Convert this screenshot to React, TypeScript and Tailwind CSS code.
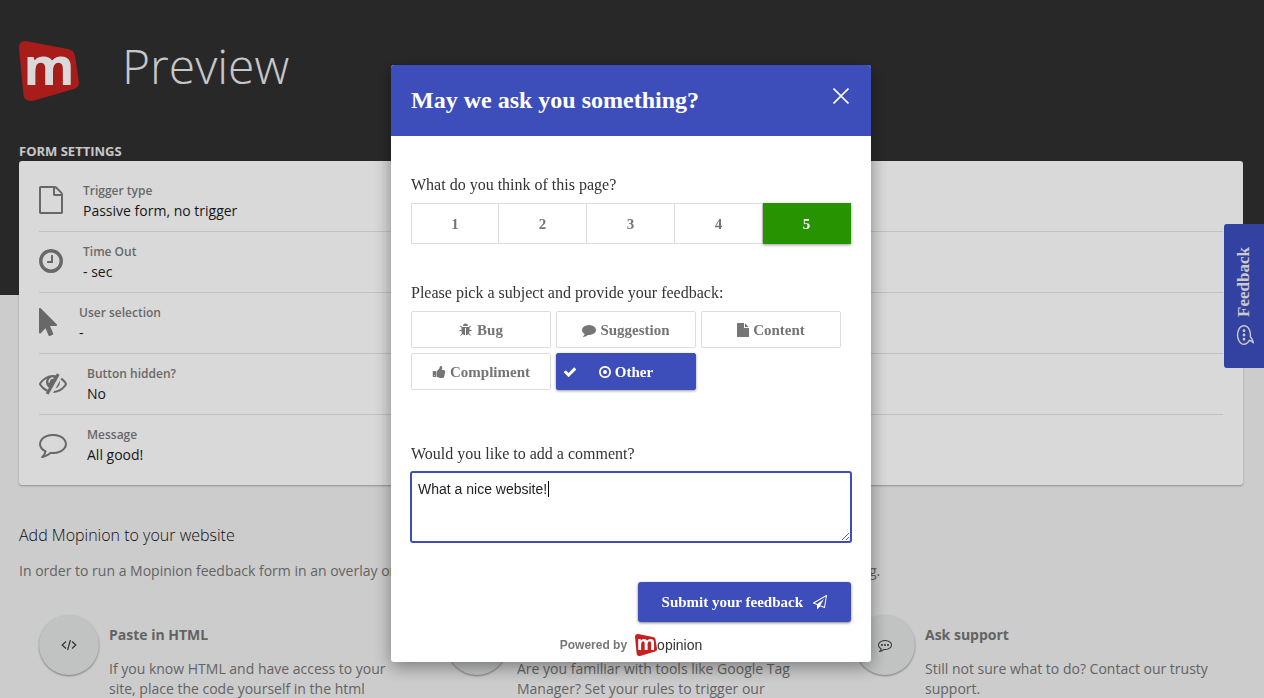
import { useState, type ReactNode } from "react";

type IconName = keyof typeof ICONS;

const BUBBLE =
  "M896 384q-204 0-381.5 69.5t-282 187.5-104.5 255q0 112 71.5 213.5t201.5 175.5l87 50-27 96q-24 91-70 172 152-63 275-171l43-38 57 6q69 8 130 8 204 0 381.5-69.5t282-187.5 104.5-255-104.5-255-282-187.5-381.5-69.5zm896 512q0 174-120 321.5t-326 233-450 85.5q-70 0-145-8-198 175-460 242-49 14-114 22h-5q-15 0-27-10.5t-16-27.5v-1q-3-4-.5-12t2-10 4.5-9.5l6-9 7-8.5 8-9q7-8 31-34.5t34.5-38 31-39.5 32.5-51 27-59 26-76q-157-89-247.5-220t-90.5-281q0-174 120-321.5t326-233 450-85.5 450 85.5 326 233 120 321.5z";

const ICONS = {
  fileOutline: {
    box: "0 0 1536 1792",
    d: "M1468 380q28 28 48 76t20 88v1152q0 40-28 68t-68 28h-1344q-40 0-68-28t-28-68v-1600q0-40 28-68t68-28h896q40 0 88 20t76 48zm-444-244v376h376q-10-29-22-41l-313-313q-12-12-41-22zm384 1528v-1024h-416q-40 0-68-28t-28-68v-416h-768v1536h1280z",
  },
  clock: {
    box: "128 0 1536 1792",
    d: "M1024 544v448q0 14-9 23t-23 9h-320q-14 0-23-9t-9-23v-64q0-14 9-23t23-9h224v-352q0-14 9-23t23-9h64q14 0 23 9t9 23zm416 352q0-148-73-273t-198-198-273-73-273 73-198 198-73 273 73 273 198 198 273 73 273-73 198-198 73-273zm224 0q0 209-103 385.5t-279.5 279.5-385.5 103-385.5-103-279.5-279.5-103-385.5 103-385.5 279.5-279.5 385.5-103 385.5 103 279.5 279.5 103 385.5z",
  },
  pointer: {
    box: "0 0 1280 1792",
    d: "M1133 1043q31 30 14 69-17 40-59 40h-382l201 476q10 25 0 49t-34 35l-177 75q-25 10-49 0t-35-34l-191-452-312 312q-19 19-45 19-12 0-24-5-40-17-40-59v-1504q0-42 40-59 12-5 24-5 27 0 45 19z",
  },
  eyeSlash: {
    box: "0 0 1792 1792",
    d: "M555 1335l78-141q-87-63-136-159t-49-203q0-121 61-225-229 117-381 353 167 258 427 375zm389-759q0-20-14-34t-34-14q-125 0-214.5 89.5t-89.5 214.5q0 20 14 34t34 14 34-14 14-34q0-86 61-147t147-61q20 0 34-14t14-34zm363-191q0 7-1 9-105 188-315 566t-316 567l-49 89q-10 16-28 16-12 0-134-70-16-10-16-28 0-12 44-87-143-65-263.5-173t-208.5-245q-20-31-20-69t20-69q153-235 380-371t496-136q89 0 180 17l54-97q10-16 28-16 5 0 18 6t31 15.5 33 18.5 31.5 18.5 19.5 11.5q16 10 16 27zm37 447q0 139-79 253.5t-209 164.5l280-502q8 45 8 84zm448 128q0 35-20 69-39 64-109 145-150 172-347.5 267t-419.5 95l74-132q212-18 392.5-137t301.5-307q-115-179-282-294l63-112q95 64 182.5 153t144.5 184q20 34 20 69z",
  },
  bubble: { box: "0 0 1792 1792", d: BUBBLE },
  bubbleDots: {
    box: "0 0 1792 1792",
    d:
      BUBBLE +
      "M640 896a128 128 0 1 1-256 0 128 128 0 1 1 256 0zM1024 896a128 128 0 1 1-256 0 128 128 0 1 1 256 0zM1408 896a128 128 0 1 1-256 0 128 128 0 1 1 256 0z",
  },
  bug: {
    box: "0 0 1792 1792",
    d: "M1632 960q0 26-19 45t-45 19h-224q0 171-67 290l208 209q19 19 19 45t-19 45q-18 19-45 19t-45-19l-198-197q-5 5-15 13t-42 28.5-65 36.5-82 29-97 13v-896h-128v896q-51 0-101.5-13.5t-87-33-66-39-43.5-32.5l-15-14-183 207q-20 21-48 21-24 0-43-16-19-18-20.5-44.5t15.5-46.5l202-227q-58-114-58-274h-224q-26 0-45-19t-19-45 19-45 45-19h224v-294l-173-173q-19-19-19-45t19-45 45-19 45 19l173 173h844l173-173q19-19 45-19t45 19 19 45-19 45l-173 173v294h224q26 0 45 19t19 45zm-480-576h-640q0-133 93.5-226.5t226.5-93.5 226.5 93.5 93.5 226.5z",
  },
  comment: {
    box: "0 0 1792 1792",
    d: "M1792 896q0 174-120 321.5t-326 233-450 85.5q-70 0-145-8-198 175-460 242-49 14-114 22-17 2-30.5-9t-17.5-29v-1q-3-4-.5-12t2-10 4.5-9.5l6-9 7-8.5 8-9q7-8 31-34.5t34.5-38 31-39.5 32.5-51 27-59 26-76q-157-89-247.5-220t-90.5-281q0-130 71-248.5t191-204.5 286-136.5 348-50.5q244 0 450 85.5t326 233 120 321.5z",
  },
  file: {
    box: "128 0 1536 1792",
    d: "M1152 512v-472q22 14 36 28l408 408q14 14 28 36h-472zm-128 32q0 40 28 68t68 28h544v1056q0 40-28 68t-68 28h-1344q-40 0-68-28t-28-68v-1600q0-40 28-68t68-28h800v544z",
  },
  thumb: {
    box: "0 0 1728 1792",
    d: "M320 1344q0-26-19-45t-45-19q-27 0-45.5 19t-18.5 45q0 27 18.5 45.5t45.5 18.5q26 0 45-18.5t19-45.5zm160-512v640q0 26-19 45t-45 19h-288q-26 0-45-19t-19-45v-640q0-26 19-45t45-19h288q26 0 45 19t19 45zm1184 0q0 86-55 149 15 44 15 76 3 76-43 137 17 56 0 117-15 57-54 94 9 112-49 181-64 76-197 78h-129q-66 0-144-15.5t-121.5-29-120.5-39.5q-123-43-158-44-26-1-45-19.5t-19-44.5v-641q0-25 18-43.5t43-20.5q24-2 76-59t101-121q68-87 101-120 18-18 31-48t17.5-48.5 13.5-60.5q7-39 12.5-61t19.5-52 34-50q19-19 45-19 46 0 82.5 10.5t60 26 40 40.5 24 45 12 50 5 45 .5 39q0 38-9.5 76t-19 60-27.5 56q-3 6-10 18t-11 22-8 24h277q78 0 135 57t57 135z",
  },
  target: {
    box: "128 0 1536 1792",
    d: "M1152 896a256 256 0 1 1-512 0 256 256 0 1 1 512 0zM896 352q-148 0-273 73t-198 198-73 273 73 273 198 198 273 73 273-73 198-198 73-273-73-273-198-198-273-73zm768 544q0 209-103 385.5t-279.5 279.5-385.5 103-385.5-103-279.5-279.5-103-385.5 103-385.5 279.5-279.5 385.5-103 385.5 103 279.5 279.5 103 385.5z",
  },
  check: {
    box: "0 0 1792 1792",
    d: "M1671 566q0 40-28 68l-724 724-136 136q-28 28-68 28t-68-28l-136-136-362-362q-28-28-28-68t28-68l136-136q28-28 68-28t68 28l294 295 656-657q28-28 68-28t68 28l136 136q28 28 28 68z",
  },
  plane: {
    box: "0 0 1792 1792",
    d: "M1764 11q33 24 27 64l-256 1536q-5 29-32 45-14 8-31 8-11 0-24-5l-527-215-298 327q-18 21-47 21-14 0-23-4-19-7-30-23.5t-11-36.5v-452l-472-193q-37-14-40-55-3-39 32-59l1664-960q35-21 68 2zm-342 1499l221-1323-1434 827 336 137 863-639-478 797z",
  },
};

function Icon({ name, className }: { name: IconName; className: string }) {
  return (
    <svg viewBox={ICONS[name].box} fill="currentColor" aria-hidden="true" className={`shrink-0 ${className}`}>
      <path d={ICONS[name].d} />
    </svg>
  );
}

function CodeIcon() {
  return (
    <svg viewBox="0 0 16 12" className="h-3 w-4" fill="none" stroke="currentColor" strokeWidth="1.2" aria-hidden="true">
      <path d="M5 2.5 1.2 6 5 9.5M11 2.5 14.8 6 11 9.5M9.4 1 6.6 11" />
    </svg>
  );
}

function LogoMark({ className }: { className: string }) {
  return (
    <svg viewBox="0 0 60 60" className={`shrink-0 overflow-visible ${className}`} role="img" aria-label="Mopinion">
      <path d="M0 7Q0-.8 8 .2L49 8q6 1.200 7 7l4 26q.4 5-5 7L14 59.800Q5.500 61 4.500 54Z" fill="#c6211f" />
      <text x="30" y="44" textAnchor="middle" fontFamily="Open Sans" fontWeight="700" fontSize="52" fill="#fff">
        m
      </text>
    </svg>
  );
}

const SETTINGS: { icon: IconName; size: string; label: string; value: string }[] = [
  { icon: "fileOutline", size: "h-7 w-6", label: "Trigger type", value: "Passive form, no trigger" },
  { icon: "clock", size: "h-7 w-6", label: "Time Out", value: "- sec" },
  { icon: "pointer", size: "h-7 w-5", label: "User selection", value: "-" },
  { icon: "eyeSlash", size: "h-7 w-7", label: "Button hidden?", value: "No" },
  { icon: "bubble", size: "h-7 w-7", label: "Message", value: "All good!" },
];

const SUBJECTS: { id: string; icon: IconName; size: string }[] = [
  { id: "Bug", icon: "bug", size: "size-3.5" },
  { id: "Suggestion", icon: "comment", size: "size-3.5" },
  { id: "Content", icon: "file", size: "h-3.5 w-3" },
  { id: "Compliment", icon: "thumb", size: "size-3.5" },
  { id: "Other", icon: "target", size: "h-3.5 w-3" },
];

function HelpItem({ icon, title, children }: { icon?: ReactNode; title: string; children: ReactNode }) {
  return (
    <article className="flex gap-2.5 px-5">
      <span className="grid size-[60px] shrink-0 place-items-center rounded-full bg-[#e3e6e5] text-[#3c3c3c] shadow-[0_1px_2px_rgba(0,0,0,0.4)]">
        {icon}
      </span>
      <div className="pt-2.5 text-sm leading-5 text-[#757575]">
        <h3 className="font-bold">{title}</h3>
        <p className="mt-3.5">{children}</p>
      </div>
    </article>
  );
}

function PreviewPage() {
  return (
    <main className="h-screen overflow-hidden bg-[linear-gradient(#303030_295px,#f0f0f0_295px)] pr-[21px] pl-[19px] font-['Open_Sans',sans-serif]">
      <header className="flex gap-[43px] pt-[41px]">
        <LogoMark className="size-[60px]" />
        <h1 className="text-5xl leading-[50px] font-light text-[#eaeaea]">Preview</h1>
      </header>

      <h2 className="mt-10 text-[13px] leading-5 font-bold text-[#eaeaea]">FORM SETTINGS</h2>
      <section className="rounded-[3px] bg-white px-5 py-2.5 shadow-[0_1px_2px_rgba(0,0,0,0.3)]">
        {SETTINGS.map((s) => (
          <div key={s.label} className="flex gap-5 border-b border-[#e3e3e3] py-2.5 last:border-b-0">
            <Icon name={s.icon} className={`mt-[5px] text-[#7b7b7b] ${s.size}`} />
            <div>
              <p className="text-xs leading-5 font-semibold text-[#7b7b7b]">{s.label}</p>
              <p className="text-sm leading-5 text-[#1c1c1c]">{s.value}</p>
            </div>
          </div>
        ))}
      </section>

      <section className="mt-10">
        <h2 className="text-base leading-5 font-light text-[#111]">Add Mopinion to your website</h2>
        <p className="mt-4 text-sm leading-5 text-[#757575]">
          In order to run a Mopinion feedback form in an overlay or embedded in your website, please select one of the
          options for deploying.
        </p>
        <div className="mt-[34px] grid grid-cols-3">
          <HelpItem icon={<CodeIcon />} title="Paste in HTML">
            If you know HTML and have access to your site, place the code yourself in the html
          </HelpItem>
          <HelpItem title="GTM">
            Are you familiar with tools like Google Tag Manager? Set your rules to trigger our
          </HelpItem>
          <HelpItem icon={<Icon name="bubbleDots" className="size-3.5" />} title="Ask support">
            Still not sure what to do? Contact our trusty support.
          </HelpItem>
        </div>
      </section>

      <button
        type="button"
        className="fixed top-56 right-0 flex h-36 w-10 rotate-180 items-center justify-center gap-2 rounded-r-[3px] bg-[#3d4ebd] font-['Liberation_Serif',serif] text-[17px] font-bold text-[#eee] [writing-mode:vertical-rl]"
      >
        <Icon name="bubbleDots" className="size-5 rotate-90" />
        Feedback
      </button>
    </main>
  );
}

function FeedbackModal() {
  const [score, setScore] = useState(5);
  const [subject, setSubject] = useState("Other");
  const [comment, setComment] = useState("What a nice website!");

  return (
    <form
      role="dialog"
      aria-labelledby="modal-title"
      className="w-[480px] overflow-hidden rounded-[3px] bg-white font-['Liberation_Serif',serif] text-base text-[#333] shadow-[0_5px_18px_rgba(0,0,0,0.4)]"
      onSubmit={(e) => e.preventDefault()}
    >
      <header className="flex items-start justify-between bg-[#3d4ebb] px-5 py-5 text-white">
        <h2 id="modal-title" className="text-2xl leading-[31px] font-bold">
          May we ask you something?
        </h2>
        <button type="button" aria-label="Close" className="mt-[3px] mr-0.5 grid size-4 place-items-center">
          <svg viewBox="0 0 16 16" className="size-4" stroke="currentColor" strokeWidth="1.6" aria-hidden="true">
            <path d="M.5.500l15 15M15.500.500l-15 15" />
          </svg>
        </button>
      </header>

      <div className="px-5 pt-[39px]">
        <fieldset>
          <legend className="mb-2 leading-5">What do you think of this page?</legend>
          <div className="grid grid-cols-5">
            {[1, 2, 3, 4, 5].map((n) => (
              <label
                key={n}
                className="relative grid h-[41px] cursor-pointer place-items-center border border-l-0 border-[#ddd] text-[15px] leading-5 font-bold text-[#757575] first:border-l has-checked:border-[#279300] has-checked:bg-[#279300] has-checked:text-white has-checked:shadow-[0_1px_3px_rgba(0,0,0,0.4)]"
              >
                <input type="radio" name="score" className="sr-only" checked={score === n} onChange={() => setScore(n)} />
                {n}
              </label>
            ))}
          </div>
        </fieldset>

        <fieldset className="mt-[39px]">
          <legend className="mb-2 leading-5">Please pick a subject and provide your feedback:</legend>
          <div className="flex flex-wrap gap-[5px]">
            {SUBJECTS.map((s) => (
              <label
                key={s.id}
                className="relative flex h-[37px] w-[140px] cursor-pointer items-center justify-center gap-1 rounded-xs border border-[#ddd] text-[15px] leading-5 font-bold text-[#757575] has-checked:border-[#3d4ebb] has-checked:bg-[#3d4ebb] has-checked:text-white has-checked:shadow-[0_1px_3px_rgba(0,0,0,0.4)]"
              >
                <input
                  type="radio"
                  name="subject"
                  className="sr-only"
                  checked={subject === s.id}
                  onChange={() => setSubject(s.id)}
                />
                {subject === s.id && <Icon name="check" className="absolute left-1.5 size-3.5" />}
                <Icon name={s.icon} className={s.size} />
                {s.id}
              </label>
            ))}
          </div>
        </fieldset>

        <label htmlFor="comment" className="mt-[54px] mb-[7px] block leading-5">
          Would you like to add a comment?
        </label>
        <div className="relative -mx-px">
          <textarea
            id="comment"
            value={comment}
            onChange={(e) => setComment(e.target.value)}
            className="block h-[72px] w-full resize-y rounded-[3px] border-2 border-[#3d4ebb] px-1.5 py-1.5 font-['Liberation_Sans',sans-serif] text-sm leading-5 text-[#222] outline-none"
          />
          <span className="absolute top-2.5 left-[138px] h-4 w-px bg-black" />
        </div>

        <div className="mt-[39px] flex justify-end">
          <button
            type="submit"
            className="flex h-10 items-center gap-2.5 rounded-[3px] bg-[#3d4ebb] px-6 text-[15px] leading-5 font-bold text-white shadow-[0_1px_3px_rgba(0,0,0,0.5)]"
          >
            Submit your feedback
            <Icon name="plane" className="size-3.5" />
          </button>
        </div>
      </div>

      <footer className="mt-3 flex items-center justify-center gap-2 pb-1.5 font-['Liberation_Sans',sans-serif]">
        <span className="text-xs font-bold text-[#777]">Powered by</span>
        <span className="flex items-center text-sm leading-5 text-[#333]">
          <LogoMark className="size-[22px]" />
          opinion
        </span>
      </footer>
    </form>
  );
}

export default function App() {
  return (
    <>
      <PreviewPage />
      <div className="fixed inset-0 flex items-start justify-center bg-black/15 pt-[65px] pr-0.5">
        <FeedbackModal />
      </div>
    </>
  );
}
